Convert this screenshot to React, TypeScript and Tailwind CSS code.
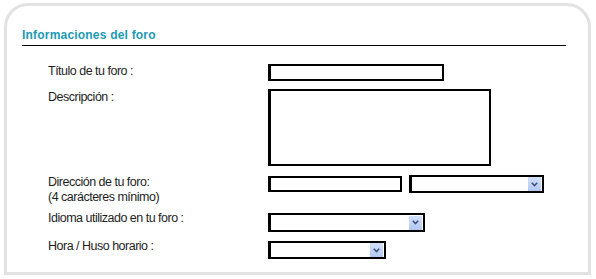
import React from 'react';

const labelCls = 'w-[261px] shrink-0 pl-[41px] text-[12.5px] leading-[14px] tracking-[-0.5px] text-[#1e1e1e]';

const SelectBox: React.FC<{ width: string; height: string; extra?: string }> = ({ width, height, extra = '' }) => (
  <div className={`flex items-center justify-end bg-white border-t-2 border-r-2 border-b-2 border-l-[3px] border-black pr-px ${width} ${height} ${extra}`}>
    <div className="flex h-[14px] w-[13px] items-center justify-center bg-gradient-to-b from-[#d2e0fb] to-[#b3c9f2]">
      <svg width="7" height="5" viewBox="0 0 7 5">
        <path d="M0.8 0.8 L3.5 3.6 L6.2 0.8" fill="none" stroke="#3f5279" strokeWidth="1.6" />
      </svg>
    </div>
  </div>
);

const TextInput: React.FC<{ width: string; height: string; extra?: string }> = ({ width, height, extra = '' }) => (
  <div className={`bg-white border-t-2 border-r-2 border-b-2 border-l-[3px] border-black ${width} ${height} ${extra}`} />
);

const App: React.FC = () => {
  return (
    <div className="h-[279px] w-[596px] bg-white pt-[3px] pl-1 font-['Liberation_Sans',Arial,sans-serif]">
      <div className="h-[272px] w-[587px] rounded-t-[24px] border-[3px] border-[#e2e2e2] bg-white">
        {/* title */}
        <div className="ml-[15px] w-[544px] border-b border-black pt-[22px] pb-[3px]">
          <h2 className="text-[12px] font-bold leading-[14px] tracking-[0.2px] text-[#1b9ab4]">Informaciones del foro</h2>
        </div>

        <div className="flex flex-col">
          <div className="mt-[18px] flex items-start">
            <span className={labelCls}>Título de tu foro :</span>
            <TextInput width="w-[176px]" height="h-[17px]" />
          </div>

          <div className="mt-[8px] flex items-start">
            <span className={`${labelCls} pt-px`}>Descripción :</span>
            <TextInput width="w-[223px]" height="h-[77px]" />
          </div>

          <div className="mt-[9px] flex items-start">
            <span className={`${labelCls} leading-[15px]`}>
              Dirección de tu foro:
              <br />
              (4 carácteres mínimo)
            </span>
            <TextInput width="w-[134px]" height="h-[16px]" extra="mt-px" />
            <SelectBox width="w-[135px]" height="h-[18px]" extra="ml-[7px]" />
          </div>

          <div className="mt-[6px] flex items-start">
            <span className={labelCls}>Idioma utilizado en tu foro :</span>
            <SelectBox width="w-[157px]" height="h-[19px]" extra="mt-[2px]" />
          </div>

          <div className="mt-[7px] flex items-start">
            <span className={labelCls}>Hora / Huso horario :</span>
            <SelectBox width="w-[118px]" height="h-[18px]" extra="mt-[2px]" />
          </div>
        </div>
      </div>
    </div>
  );
};

export default App;
